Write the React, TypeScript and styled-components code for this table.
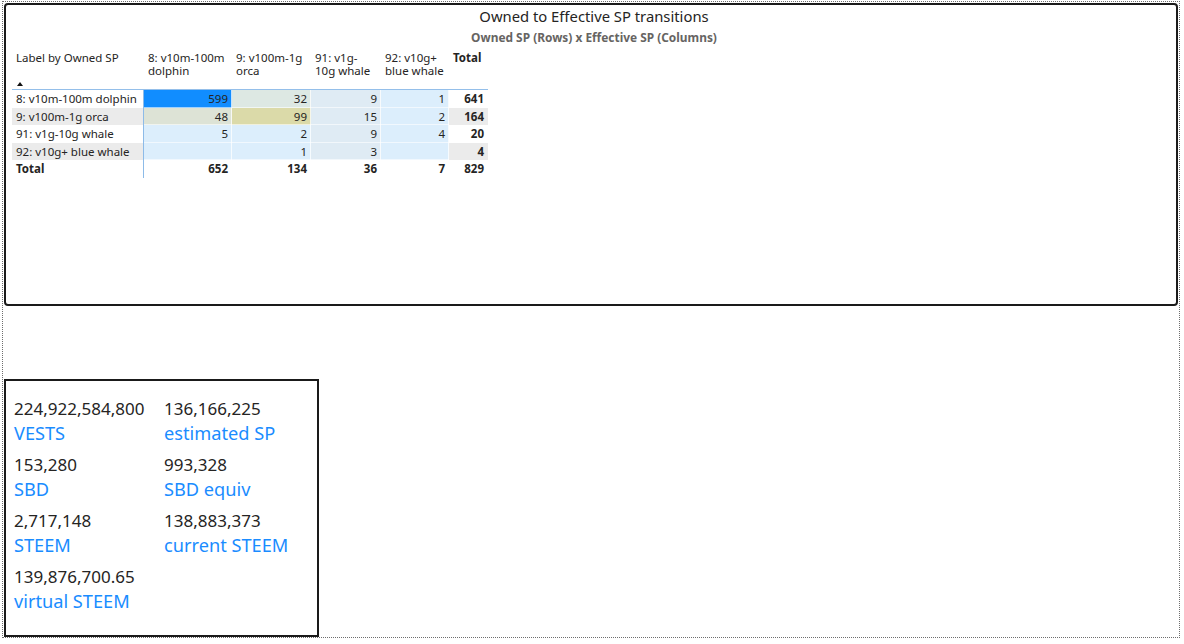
import React from 'react'
import styled, { createGlobalStyle } from 'styled-components'

type Cell = { value: string; bg: string }
type Row = { label: string; shaded: boolean; cells: Cell[]; total: string }

const BLUE = '#dceefc'
const STEEL = '#dfebf4'

const columns: string[][] = [
  ['8: v10m-100m', 'dolphin'],
  ['9: v100m-1g', 'orca'],
  ['91: v1g-', '10g whale'],
  ['92: v10g+', 'blue whale'],
]

const rows: Row[] = [
  {
    label: '8: v10m-100m dolphin',
    shaded: false,
    cells: [
      { value: '599', bg: '#118dff' },
      { value: '32', bg: '#dde8e3' },
      { value: '9', bg: STEEL },
      { value: '1', bg: BLUE },
    ],
    total: '641',
  },
  {
    label: '9: v100m-1g orca',
    shaded: true,
    cells: [
      { value: '48', bg: '#dde3d6' },
      { value: '99', bg: '#dbdaa9' },
      { value: '15', bg: STEEL },
      { value: '2', bg: BLUE },
    ],
    total: '164',
  },
  {
    label: '91: v1g-10g whale',
    shaded: false,
    cells: [
      { value: '5', bg: BLUE },
      { value: '2', bg: BLUE },
      { value: '9', bg: STEEL },
      { value: '4', bg: BLUE },
    ],
    total: '20',
  },
  {
    label: '92: v10g+ blue whale',
    shaded: true,
    cells: [
      { value: '', bg: BLUE },
      { value: '1', bg: BLUE },
      { value: '3', bg: STEEL },
      { value: '', bg: BLUE },
    ],
    total: '4',
  },
]

const totals = ['652', '134', '36', '7', '829']

const stats = [
  { value: '224,922,584,800', label: 'VESTS' },
  { value: '136,166,225', label: 'estimated SP' },
  { value: '153,280', label: 'SBD' },
  { value: '993,328', label: 'SBD equiv' },
  { value: '2,717,148', label: 'STEEM' },
  { value: '138,883,373', label: 'current STEEM' },
  { value: '139,876,700.65', label: 'virtual STEEM' },
]

export default function App(): JSX.Element {
  return (
    <>
      <GlobalStyle />
      <Page>
        <MatrixPanel>
          <Title>Owned to Effective SP transitions</Title>
          <Subtitle>Owned SP (Rows) x Effective SP (Columns)</Subtitle>
          <Matrix>
            <HeaderCell>
              <span>Label by Owned SP</span>
              <SortArrow />
            </HeaderCell>
            {columns.map((lines) => (
              <HeaderCell key={lines[0]}>
                <span>
                  {lines[0]}
                  <br />
                  {lines[1]}
                </span>
              </HeaderCell>
            ))}
            <HeaderCell $bold>
              <span>Total</span>
            </HeaderCell>

            {rows.map((row) => (
              <React.Fragment key={row.label}>
                <RowLabel $shaded={row.shaded}>{row.label}</RowLabel>
                {row.cells.map((cell, i) => (
                  <ValueCell key={i} style={{ background: cell.bg }}>
                    {cell.value}
                  </ValueCell>
                ))}
                <TotalCell $shaded={row.shaded}>{row.total}</TotalCell>
              </React.Fragment>
            ))}

            <RowLabel $bold>Total</RowLabel>
            {totals.map((t, i) => (
              <TotalCell key={i}>{t}</TotalCell>
            ))}
          </Matrix>
        </MatrixPanel>

        <CardPanel>
          {stats.map((s) => (
            <Stat key={s.label}>
              <StatValue>{s.value}</StatValue>
              <StatLabel>{s.label}</StatLabel>
            </Stat>
          ))}
        </CardPanel>
      </Page>
    </>
  )
}

const GlobalStyle = createGlobalStyle`
  html, body {
    margin: 0;
    padding: 0;
    background: #ffffff;
  }
  body {
    font-family: "Noto Sans", "Open Sans", sans-serif;
    color: #252423;
  }
`

const Page = styled.div`
  box-sizing: border-box;
  width: 1178px;
  height: 637px;
  margin: 1px 0 0 2px;
  border: 1px dotted #6e6e6e;
  padding: 1px 0 0 1px;
  display: flex;
  flex-direction: column;
  gap: 73px;
`

const MatrixPanel = styled.div`
  box-sizing: border-box;
  width: 1174px;
  height: 303px;
  border: 2px solid #1a1a1a;
  border-radius: 4px;
  padding: 1px 0 0 6px;
  display: flex;
  flex-direction: column;
`

const Title = styled.div`
  font-family: "Noto Sans", sans-serif;
  font-size: 14.8px;
  line-height: 20px;
  text-align: center;
  color: #252423;
`

const Subtitle = styled.div`
  font-family: "Noto Sans", sans-serif;
  font-size: 11.9px;
  font-weight: 700;
  line-height: 16px;
  margin-top: 3px;
  text-align: center;
  color: #666462;
`

const Matrix = styled.div`
  display: grid;
  grid-template-columns: 132px 88px 79px 70px 68px 39px;
  grid-template-rows: 39px repeat(5, 17.5px);
  margin-top: 6px;
  width: 476px;
  font-size: 11.5px;
  color: #252423;
`

const HeaderCell = styled.div<{ $bold?: boolean }>`
  box-sizing: border-box;
  display: flex;
  flex-direction: column;
  justify-content: space-between;
  padding: 0 4px 3px;
  line-height: 13px;
  font-weight: ${(p) => (p.$bold ? 700 : 400)};
  border-bottom: 1px solid #94bfea;
  white-space: nowrap;
`

const SortArrow = styled.span`
  width: 0;
  height: 0;
  margin-left: 1px;
  border-left: 3.5px solid transparent;
  border-right: 3.5px solid transparent;
  border-bottom: 4px solid #111;
`

const RowLabel = styled.div<{ $shaded?: boolean; $bold?: boolean }>`
  box-sizing: border-box;
  padding: 0 4px;
  line-height: 17.5px;
  white-space: nowrap;
  font-weight: ${(p) => (p.$bold ? 700 : 400)};
  background: ${(p) => (p.$shaded ? '#ebebeb' : 'transparent')};
  border-right: 1px solid #8dbbe8;
`

const ValueCell = styled.div`
  box-sizing: border-box;
  padding: 0 4px;
  line-height: 17.5px;
  text-align: right;
  box-shadow: inset -1px 0 0 rgba(255, 255, 255, 0.75), inset 0 -1px 0 rgba(255, 255, 255, 0.6);
`

const TotalCell = styled.div<{ $shaded?: boolean }>`
  box-sizing: border-box;
  padding: 0 4px;
  line-height: 17.5px;
  text-align: right;
  font-weight: 700;
  background: ${(p) => (p.$shaded ? '#ebebeb' : 'transparent')};
`

const CardPanel = styled.div`
  box-sizing: border-box;
  width: 315px;
  height: 258px;
  border: 2px solid #1a1a1a;
  padding: 15px 0 0 8px;
  display: grid;
  grid-template-columns: 150px 150px;
  grid-auto-rows: 56px;
  align-content: start;
`

const Stat = styled.div`
  display: flex;
  flex-direction: column;
`

const StatValue = styled.div`
  font-size: 17px;
  line-height: 25px;
  color: #252423;
  white-space: nowrap;
`

const StatLabel = styled.div`
  font-size: 18.2px;
  line-height: 25px;
  color: #1a8cff;
  white-space: nowrap;
`
